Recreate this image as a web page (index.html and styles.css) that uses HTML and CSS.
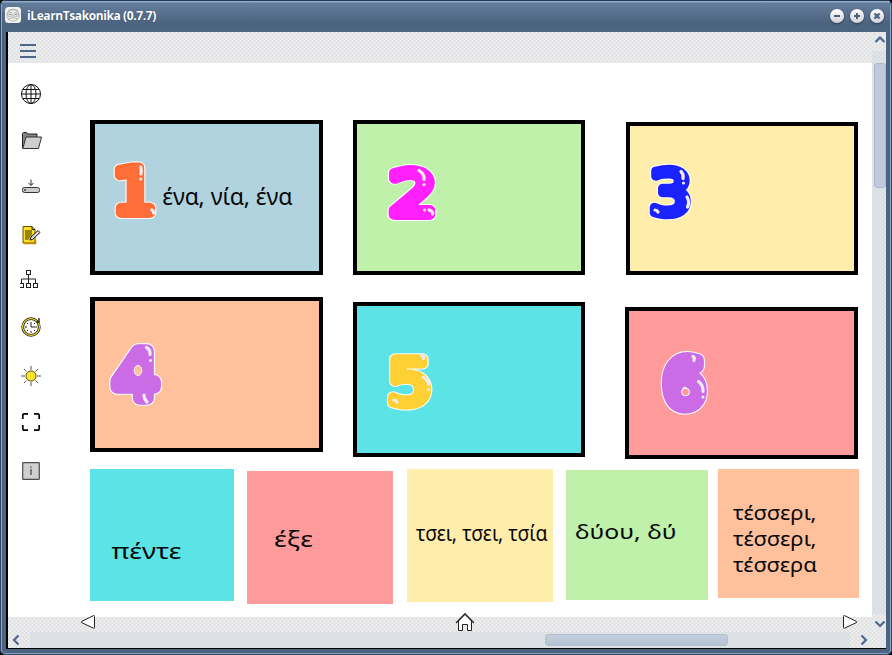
FILE: index.html
```
<!DOCTYPE html>
<html lang="el">
<head>
<meta charset="utf-8">
<title>iLearnTsakonika (0.7.7)</title>
<link rel="stylesheet" href="styles.css">
</head>
<body>
<div class="window">
  <header class="titlebar">
    <svg class="app-icon" width="16" height="16" viewBox="0 0 16 16"><rect width="16" height="16" rx="3.5" fill="#f1f1ee"/><g fill="none" stroke="#a0a0a0" stroke-width=".7"><path d="M2 8C1.500 1 14.500 1 14 8C14 16 2 16 2 8ZM3 4Q8 .5 13 4M3 12Q8 9.500 13 12M8 8v3"/><circle cx="5" cy="7.500" r="2.300"/><circle cx="11" cy="7.500" r="2.300"/></g><g fill="#666"><circle cx="5" cy="7.500" r=".8"/><circle cx="11" cy="7.500" r=".8"/></g></svg>
    <h1 class="title">iLearnTsakonika (0.7.7)</h1>
    <div class="controls">
      <button class="control" aria-label="Minimize"><svg width="14" height="14" viewBox="0 0 14 14"><path d="M4 7h6" stroke-width="2"/></svg></button>
      <button class="control" aria-label="Maximize"><svg width="14" height="14" viewBox="0 0 14 14"><path d="M4 7h6M7 4v6" stroke-width="2"/></svg></button>
      <button class="control" aria-label="Close"><svg width="14" height="14" viewBox="0 0 14 14"><path d="M4.500 4.500l5 5M9.500 4.500l-5 5" stroke-width="2.300"/></svg></button>
    </div>
  </header>
  <div class="client">
    <div class="upper">
      <div class="page">
        <div class="toolbar"><svg width="16" height="14" viewBox="0 0 16 14"><path d="M0 1h16M0 7h16M0 13h16" stroke="#4d6685" stroke-width="2"/></svg></div>
        <main class="content">
          <nav class="sidebar">
            <svg viewBox="0 0 22 22"><g fill="none" stroke="#111" stroke-width="1"><circle cx="11" cy="11" r="9.500"/><ellipse cx="11" cy="11" rx="5" ry="9.500"/><path d="M11 1.500v19M1.500 11h19M3 6.500h16M3 15.500h16"/></g></svg>
            <svg viewBox="0 0 22 22"><path d="M2.500 19V4.500l1-1h3l1 1.500h9.500v3" fill="#858585" stroke="#222"/><path d="M6 8h15.500l-3 11.500H2.800Z" fill="#cfcdcd" stroke="#333"/></svg>
            <svg viewBox="0 0 22 22"><path d="M11 3.500v6M8.500 7L11 9.500 13.500 7" fill="none" stroke="#333"/><rect x="2.500" y="11.500" width="17" height="5" rx="2" fill="#ccc" stroke="#333"/><path d="M5 13v2" stroke="#222" stroke-width="1.300"/></svg>
            <svg viewBox="0 0 22 22"><path d="M3 2.500h9l3 3v13.500H3Z" fill="#ffe021" stroke="#5b5000"/><path d="M4 19.500h11.500v-4" fill="none" stroke="#c98900" stroke-width="1.500"/><path d="M5 6h7v5l-4 5H5Z" fill="#978600"/><path d="M12 2.500v3h3" fill="none" stroke="#222"/><path d="M10 16l1-3 7-6.500 2 2-7.500 7Z" fill="#ddd" stroke="#111"/></svg>
            <svg viewBox="0 0 22 22"><g transform="translate(-3 -1)" fill="#fff" stroke="#222"><path d="M11.500 6v8M4.500 14v-4h14v4" fill="none"/><rect x="9.500" y="1.500" width="4" height="4"/><rect x="2.500" y="14.500" width="4" height="4"/><rect x="9.500" y="14.500" width="4" height="4"/><rect x="16.500" y="14.500" width="4" height="4"/></g></svg>
            <svg viewBox="0 0 22 22"><g transform="translate(0 -1)"><circle cx="11" cy="11" r="8.300" fill="#fff" stroke="#222" stroke-width="2.800"/><circle cx="11" cy="11" r="8.400" fill="none" stroke="#f2dc26" stroke-width="1.200"/><path d="M11 6v5h4.500M5 11h2M11 15v2M15.500 11H17M7 7l1 1M7 15l1-1M15 15l-1-1M15 7l-1 1" fill="none" stroke="#222" stroke-width="1"/><path d="M16.500 6h2.500V2" fill="none" stroke="#111" stroke-width="1.300"/></g></svg>
            <svg viewBox="0 0 22 22"><path d="M11 1v4M11 17v4M1 11h4M17 11h4M4 4l2.500 2.500M18 4l-2.500 2.500M4 18l2.500-2.500M18 18l-2.500-2.500" stroke="#555"/><circle cx="11" cy="11" r="5" fill="#ffe629" stroke="#5d5618"/></svg>
            <svg viewBox="0 0 22 22"><path d="M2.800 8V4.500q0-1.700 1.700-1.700H8M14 2.800h3.500q1.700 0 1.700 1.700V8M19.200 14v3.500q0 1.700-1.700 1.700H14M8 19.200H4.500q-1.700 0-1.700-1.700V14" fill="none" stroke="#000" stroke-width="1.700"/></svg>
            <svg viewBox="0 0 22 22"><rect x="2.700" y="2.700" width="16.600" height="16.600" rx=".6" fill="#cfcfcf" stroke="#4c4c4c" stroke-width="1.200"/><path d="M11 9v6M11 6.500v1.300" stroke="#555" stroke-width="1.400"/></svg>
          </nav>
          <section class="board">
            <div class="card c1"><svg viewBox="94 124 225 147">
              <g transform="translate(133.500 213.500) scale(1.100 1)"><text class="digit halo">1</text><text class="digit orange">1</text></g>
              <path class="shine" d="M140 167q1 4 0 7M151 210q2 1 2 3"/><circle class="dot" cx="140" cy="179" r="1.600"/>
              <text class="word" x="161.500" y="205" font-size="23.500" textLength="131" lengthAdjust="spacingAndGlyphs">ένα, νία, ένα</text></svg></div>
            <div class="card c2"><svg viewBox="357 124 224 147">
              <g transform="translate(413 214.500) scale(1.200 .98)"><text class="digit halo">2</text><text class="digit magenta">2</text></g>
              <path class="shine" d="M419 170.500q6 4 5 9M429 210q4 1 3.500 4"/><circle class="dot" cx="424" cy="184.500" r="1.600"/><circle class="dot" cx="424.500" cy="210" r="1.600"/></svg></div>
            <div class="card c3"><svg viewBox="630 126 224 145">
              <g transform="translate(670.500 214) scale(1.060 .97)"><text class="digit slim halo">3</text><text class="digit slim blue">3</text></g>
              <path class="shine" d="M681 171.500q3 3 2 7M687 197q3 5 .5 10M655 210q2 0 3 2"/><circle class="dot" cx="683.500" cy="183" r="1.600"/></svg></div>
            <div class="card c4"><svg viewBox="94 301 224 147">
              <g transform="translate(135 398) scale(1.100 1.040)"><text class="digit wide halo">4</text><text class="digit wide violet">4</text></g>
              <ellipse class="hole" cx="137" cy="370.500" rx="3.800" ry="5"/>
              <path class="shine" d="M145.500 347.500q4 2 3.500 7M143 395q0 4 3 7"/><circle class="dot" cx="149.500" cy="360.500" r="1.600"/></svg></div>
            <div class="card c5"><svg viewBox="357 306 224 147">
              <g transform="translate(410 404) scale(1.130 1)"><text class="digit slim halo">5</text><text class="digit slim yellow">5</text></g>
              <path class="shine" d="M421.500 355.500q3 1 2 3M423.500 377.500q5 3 5 7M394 400q2 0 3 2"/><circle class="dot" cx="428.500" cy="389.500" r="1.600"/></svg></div>
            <div class="card c6"><svg viewBox="629 311 225 144">
              <g transform="translate(684 406) scale(1.020 1.020)"><text class="digit wide halo">6</text><text class="digit wide violet">6</text></g>
              <ellipse class="hole pink" cx="685.500" cy="392" rx="4" ry="3.800"/>
              <path class="shine" d="M693 356.500q2 1 1 4M698.500 381.500q5 4 4.500 10"/><circle class="dot" cx="703" cy="397" r="1.600"/></svg></div>
            <div class="answers">
              <div class="tile t1"><svg viewBox="90 469 144 132"><text class="word" x="111.500" y="559" font-size="21.500" textLength="70" lengthAdjust="spacingAndGlyphs">πέντε</text></svg></div>
              <div class="tile t2"><svg viewBox="247 471 146 133"><text class="word" x="274" y="546.500" font-size="21.500" textLength="39" lengthAdjust="spacingAndGlyphs">έξε</text></svg></div>
              <div class="tile t3"><svg viewBox="407 469 146 133"><text class="word" x="416" y="541" font-size="21.500" textLength="131.500" lengthAdjust="spacingAndGlyphs">τσει, τσει, τσία</text></svg></div>
              <div class="tile t4"><svg viewBox="566 470 142 130"><text class="word" x="575" y="539" font-size="20" textLength="101.500" lengthAdjust="spacingAndGlyphs">δύου, δύ</text></svg></div>
              <div class="tile t5"><svg viewBox="718 469 141 129"><g font-size="19.500"><text class="word" x="733" y="520" textLength="83.500" lengthAdjust="spacingAndGlyphs">τέσσερι,</text><text class="word" x="733" y="546" textLength="83.500" lengthAdjust="spacingAndGlyphs">τέσσερι,</text><text class="word" x="733" y="572" textLength="84" lengthAdjust="spacingAndGlyphs">τέσσερα</text></g></svg></div>
            </div>
          </section>
        </main>
        <footer class="pager">
          <svg width="16" height="16" viewBox="0 0 16 16"><path d="M14.500 2.500v11q0 1-1 .7L1.500 8.500q-.7-.5 0-1L13.500 1.600q1-.3 1 .9Z" fill="#fff" stroke="#222"/></svg>
          <svg class="home" width="20" height="20" viewBox="0 0 20 20"><path d="M3.500 9v9.500h4v-6h5v6h4V9L10 2.500Z" fill="#fff" stroke="#222"/><path d="M1 11L10 1.500 19 11" fill="none" stroke="#222" stroke-width="1.200"/></svg>
          <svg width="16" height="16" viewBox="0 0 16 16"><path d="M1.500 2.500v11q0 1 1 .7L14.500 8.500q.7-.5 0-1L2.500 1.600q-1-.3-1 .9Z" fill="#fff" stroke="#222"/></svg>
        </footer>
      </div>
      <div class="vscroll">
        <svg width="12" height="8" viewBox="0 0 12 8"><path d="M1.500 6L6 1.500 10.500 6"/></svg>
        <div class="vtrack"><div class="vthumb"></div></div>
        <svg width="12" height="8" viewBox="0 0 12 8"><path d="M1.500 1.500L6 6l4.500-4.500"/></svg>
      </div>
    </div>
    <div class="hscroll">
      <svg width="8" height="12" viewBox="0 0 8 12"><path d="M6.500 1.500L2 6l4.500 4.500"/></svg>
      <div class="htrack"><div class="hthumb"></div></div>
      <svg width="8" height="12" viewBox="0 0 8 12"><path d="M1.500 1.500L6 6l-4.500 4.500"/></svg>
    </div>
  </div>
</div>
</body>
</html>
```
FILE: styles.css
```
* { box-sizing: border-box; }
body { margin: 0; background: #000; font-family: "Noto Sans", sans-serif; }
svg { display: block; flex: none; }

.window {
  width: 892px;
  height: 655px;
  padding: 0 6px 6px 6px;
  border-radius: 6px;
  background: #4b6482;
  box-shadow: inset 0 0 0 1px #304866, inset 0 0 0 2px #8ba4c6;
  overflow: hidden;
}
.titlebar {
  height: 32px;
  margin: 0 -4px;
  padding: 0 6px 0 3px;
  display: flex;
  align-items: center;
  background: linear-gradient(#26374f 0 1px, #91aacb 1px 2px, #647d9c 3px, #4c637f 24px, #4d6581);
}
.app-icon { margin-top: -2px; }
.title { margin: 0 auto 0 6px; color: #fff; font: bold 12px/18px "Open Sans", sans-serif; letter-spacing: -.4px; text-shadow: 0 0 1px #26384f; }
.controls { display: flex; gap: 6px; }
.control { width: 14px; height: 14px; padding: 0; border: 0; border-radius: 50%; background: linear-gradient(#fff, #d0d2d5); box-shadow: 0 1px 2px #2b3c52; }
.control path { stroke: #4b607c; }

.client {
  height: 617px;
  border-left: 2px solid #000;
  border-bottom: 1px solid #000;
  background:
    linear-gradient(45deg, #dcdee155 25%, transparent 25% 50%, #dcdee155 50% 75%, transparent 75%) 0 0 / 4px 4px,
    linear-gradient(-45deg, #d6d8dc88 25%, transparent 25% 50%, #d6d8dc88 50% 75%, transparent 75%) 0 0 / 4px 4px,
    #efefef;
}
.upper { display: flex; height: 600px; }
.page { width: 864px; }
.toolbar { height: 31px; padding: 12px; }
.content { display: flex; height: 554px; background: #fff; }
.sidebar { width: 82px; padding: 20px 0 0 12px; display: grid; grid-template-rows: 46px 47px 48px 46px 47px 48px 46px 49px 22px; }
.sidebar svg { width: 22px; height: 22px; }

.board { display: grid; grid-template-columns: 233px 232px 233px; grid-template-rows: 155px 157px 136px; column-gap: 30px; row-gap: 22px; justify-content: start; width: 782px; padding-top: 57px; }
.card { border: 4px solid #000; overflow: hidden; }
.card svg, .tile svg { width: 100%; height: 100%; overflow: visible; }
.c1 { height: 155px; border-left-width: 5px; background: #b1d3df; }
.c2 { height: 155px; background: #bff1aa; }
.c3 { width: 232px; height: 153px; margin: 2px 0 0 11px; background: #ffeeab; }
.c4 { height: 155px; border-left-width: 5px; background: #ffc19c; }
.c5 { height: 155px; margin-top: 5px; background: #5ce3e6; }
.c6 { height: 152px; margin: 10px -10px 0 10px; background: #ff9b9b; }
.answers { grid-column: 1 / 4; display: flex; margin-top: -7px; width: 780px; }
.tile { flex: none; }
.t1 { width: 144px; height: 132px; background: #5ce3e6; }
.t2 { width: 146px; height: 133px; margin: 2px 0 0 13px; background: #ff9b9b; }
.t3 { width: 146px; height: 133px; margin-left: 14px; background: #ffeeab; }
.t4 { width: 142px; height: 130px; margin: 1px 0 0 13px; background: #bff1aa; }
.t5 { width: 141px; height: 129px; margin-left: 10px; background: #ffc19c; }

.word { font-family: "Noto Sans", sans-serif; fill: #080808; }
.digit { font: 62px "DejaVu Sans", sans-serif; text-anchor: middle; stroke-width: 10px; stroke-linejoin: round; stroke-linecap: round; }
.digit.slim { stroke-width: 9px; }
.digit.wide { stroke-width: 13px; }
.orange { fill: #ff6e38; stroke: #ff6e38; }
.magenta { fill: #ff20fb; stroke: #ff20fb; }
.blue { fill: #1a22ff; stroke: #1a22ff; }
.violet { fill: #cb6ce6; stroke: #cb6ce6; }
.yellow { fill: #ffd033; stroke: #ffd033; }
.digit.halo { fill: #fff; stroke: #fff; stroke-width: 12px; }
.digit.slim.halo { stroke-width: 11px; }
.digit.wide.halo { stroke-width: 15px; }
.hole { fill: #ffc19c; stroke: #fff; stroke-width: 1px; }
.hole.pink { fill: #ff9b9b; }
.shine { fill: none; stroke: #f0ecf0; stroke-width: 3.200px; stroke-linecap: round; }
.dot { fill: #f0ecf0; }

.pager { display: flex; height: 15px; justify-content: space-between; padding: 0 14px 0 72px; margin-top: -3px; }
.home { margin: -2px 8px 0 0; }

.vscroll { width: 14px; padding: 4px 0 4px 2px; display: flex; flex-direction: column; justify-content: space-between; }
.vscroll path, .hscroll path { fill: none; stroke: #506a8c; stroke-width: 2.200; }
.vtrack { height: 563px; margin-left: -2px; padding: 12px 0 0 2px; background: #c9d4df55; }
.vthumb { height: 125px; border: 1px solid #aabbcd; border-radius: 3px; background: #bfcbda; }
.hscroll { display: flex; align-items: center; height: 16px; padding: 0 18px 0 4px; }
.htrack { flex: 1; height: 16px; margin: 0 10px; padding: 2px 0 0 515px; background: #c9d4df55; }
.hthumb { width: 183px; height: 12px; border: 1px solid #b1bfcf; border-radius: 3px; background: linear-gradient(#c4cfdd, #b5c2d2); }
```
